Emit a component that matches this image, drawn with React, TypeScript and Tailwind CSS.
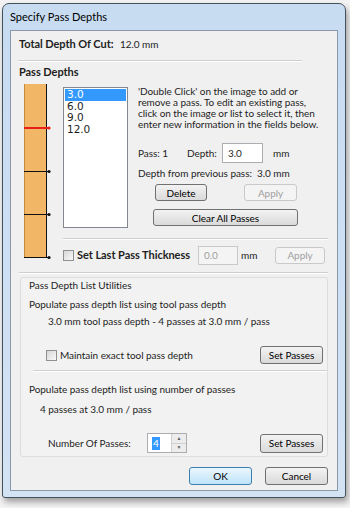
import React from 'react'

const font = "font-['Lato','Liberation_Sans',sans-serif]"

function Btn({ label, w, h = 'h-[18px]', disabled, blue }: { label: string; w: string; h?: string; disabled?: boolean; blue?: boolean }) {
    return (
        <button
            className={`${w} ${h} rounded-[3px] border text-[10px] leading-none flex items-center justify-center whitespace-nowrap ${
                disabled
                    ? 'border-[#c9c9c9] bg-[#f4f4f4] text-[#a0a0a0]'
                    : blue
                    ? 'border-[#3c7fb1] bg-gradient-to-b from-[#eaf6fd] to-[#bfe4f9] text-black'
                    : 'border-[#707070] bg-gradient-to-b from-[#f3f3f3] to-[#dadada] text-black'
            }`}
        >
            {label}
        </button>
    )
}

function Check() {
    return <span className="w-[11px] h-[11px] border border-[#8e8f8f] bg-gradient-to-br from-[#d8d8d8] to-[#f8f8f8] inline-block shrink-0" />
}

function Sep({ cls }: { cls: string }) {
    return <div className={`${cls} h-[2px] border-t border-[#cfcfcf] border-b border-b-white`} />
}

function Ruler() {
    return (
        <svg width="44" height="176" viewBox="0 0 44 176">
            <rect x="1" y="0" width="22" height="174" fill="#f2b766" />
            <line x1="1.5" y1="0" x2="1.5" y2="174" stroke="#c98a3a" />
            <line x1="23.5" y1="0" x2="23.5" y2="174" stroke="#111" />
            <line x1="1" y1="44" x2="25" y2="44" stroke="#e8201c" strokeWidth="2" />
            <circle cx="26" cy="44" r="1.6" fill="#e8201c" />
            <line x1="1" y1="87.5" x2="25" y2="87.5" stroke="#111" />
            <circle cx="26" cy="87.5" r="1.6" fill="#111" />
            <line x1="1" y1="130.5" x2="25" y2="130.5" stroke="#111" />
            <circle cx="26" cy="130.5" r="1.6" fill="#111" />
            <line x1="1" y1="173.5" x2="25" y2="173.5" stroke="#111" />
            <circle cx="26" cy="173.5" r="1.6" fill="#111" />
        </svg>
    )
}

export default function App() {
    return (
        <div className={`w-[350px] h-[508px] bg-[#f3f3f3] pl-[2px] pt-[3px] ${font} text-[10px] tracking-[-0.05px] text-[#1e1e1e] whitespace-nowrap`}>
            <div className="w-[344px] h-[495px] rounded-t-[7px] rounded-b-[3px] border border-[#44515e] bg-gradient-to-b from-[#c7dbf1] to-[#d3e3f4] shadow-[2px_4px_6px_rgba(0,0,0,0.35)] flex flex-col">
                <div className="h-[26px] pl-[7px] flex items-center text-[11px] tracking-normal text-black">Specify Pass Depths</div>
                <div className="mx-[7px] h-[461px] border border-[#8999a9] bg-[#f0f0f0] flex flex-col">
                    <div className="pl-[8px] mt-[6px] flex items-center h-[14px]">
                        <span className="font-bold text-[11px] w-[101px]">Total Depth Of Cut:</span>
                        <span>12.0 mm</span>
                    </div>
                    <Sep cls="ml-[7px] mt-[9px] w-[284px]" />
                    <div className="pl-[8px] mt-[3px] h-[14px] leading-[14px] text-[11px] font-bold">Pass Depths</div>
                    <div className="flex mt-[5px]">
                        <div className="pl-[12px] w-[52px]">
                            <Ruler />
                        </div>
                        <div className="flex-1 flex flex-col pr-[9px]">
                            <div className="flex">
                                <div className="w-[65px] h-[141px] mt-[3px] border border-[#828790] bg-white text-[10.5px] leading-[11.5px] pt-[1px] pl-[1px] font-['DejaVu_Sans',sans-serif]">
                                    <div className="bg-[#3399ff] text-white pl-[2px] w-[61px]">3.0</div>
                                    <div className="pl-[2px]">6.0</div>
                                    <div className="pl-[2px]">9.0</div>
                                    <div className="pl-[2px]">12.0</div>
                                </div>
                                <div className="ml-[10px] flex flex-col">
                                    <div className="leading-[11px] mt-[2px]">
                                        'Double Click' on the image to add or
                                        <br />
                                        remove a pass. To edit an existing pass,
                                        <br />
                                        click on the image or list to select it, then
                                        <br />
                                        enter new information in the fields below.
                                    </div>
                                    <div className="flex items-center mt-[13px] h-[20px]">
                                        <span className="w-[49px]">Pass: 1</span>
                                        <span className="w-[35px]">Depth:</span>
                                        <span className="w-[41px] h-[20px] border border-[#abadb3] bg-white pl-[5px] flex items-center">3.0</span>
                                        <span className="ml-[10px]">mm</span>
                                    </div>
                                    <div className="mt-[3px] h-[14px] leading-[14px]">Depth from previous pass:&nbsp;&nbsp;3.0 mm</div>
                                    <div className="flex mt-[4px] ml-[17px]">
                                        <Btn label="Delete" w="w-[52px]" h="h-[17px]" />
                                        <div className="ml-[37px]">
                                            <Btn label="Apply" w="w-[53px]" h="h-[17px]" disabled />
                                        </div>
                                    </div>
                                    <div className="mt-[8px] ml-[15px]">
                                        <Btn label="Clear All Passes" w="w-[145px]" h="h-[17px]" />
                                    </div>
                                </div>
                            </div>
                            <Sep cls="mt-[10px]" />
                            <div className="flex items-center mt-[5px] h-[20px]">
                                <Check />
                                <span className="font-bold text-[11px] ml-[3px] w-[121px]">Set Last Pass Thickness</span>
                                <span className="w-[40px] h-[19px] border border-[#c9c9c9] bg-[#f4f4f4] text-[#a0a0a0] pl-[5px] flex items-center">0.0</span>
                                <span className="ml-[3px] w-[34px]">mm</span>
                                <Btn label="Apply" w="w-[50px]" h="h-[17px]" disabled />
                            </div>
                        </div>
                    </div>
                    <Sep cls="ml-[8px] mr-[9px] mt-[7px]" />
                    <div className="mx-[9px] mt-[3px] border border-[#dddddd] rounded-[3px] bg-[#f2f2f2] flex flex-col pb-[3px]">
                        <div className="pl-[8px] h-[14px] leading-[14px]">Pass Depth List Utilities</div>
                        <div className="pl-[8px] mt-[5px] h-[14px] leading-[14px]">Populate pass depth list using tool pass depth</div>
                        <div className="pl-[27px] mt-[3px] h-[14px] leading-[14px]">3.0 mm tool pass depth - 4 passes at 3.0 mm / pass</div>
                        <div className="flex items-center mt-[18px] pl-[25px] pr-[4px] h-[18px]">
                            <Check />
                            <span className="ml-[3px]">Maintain exact tool pass depth</span>
                            <div className="ml-auto">
                                <Btn label="Set Passes" w="w-[63px]" />
                            </div>
                        </div>
                        <Sep cls="ml-[12px] mt-[6px]" />
                        <div className="pl-[8px] mt-[10px] h-[14px] leading-[14px]">Populate pass depth list using number of passes</div>
                        <div className="pl-[19px] mt-[6px] h-[14px] leading-[14px]">4 passes at 3.0 mm / pass</div>
                        <div className="flex items-center mt-[17px] pl-[27px] pr-[4px] h-[20px]">
                            <span className="w-[99px]">Number Of Passes:</span>
                            <div className="flex w-[40px] h-[20px] border border-[#abadb3] bg-white">
                                <div className="flex-1 pl-[4px] flex items-center">
                                    <span className="bg-[#3399ff] text-white leading-[13px] px-[1px]">4</span>
                                </div>
                                <div className="w-[15px] flex flex-col bg-[#ececec] border-l border-[#d0d0d0]">
                                    <span className="flex-1 flex items-center justify-center text-[5px] text-[#606060] border-b border-[#d0d0d0]">▲</span>
                                    <span className="flex-1 flex items-center justify-center text-[5px] text-[#606060]">▼</span>
                                </div>
                            </div>
                            <div className="ml-auto">
                                <Btn label="Set Passes" w="w-[63px]" h="h-[19px]" />
                            </div>
                        </div>
                    </div>
                    <div className="flex justify-end gap-[13px] mt-[10px] pr-[9px]">
                        <Btn label="OK" w="w-[63px]" blue />
                        <Btn label="Cancel" w="w-[63px]" />
                    </div>
                </div>
            </div>
        </div>
    )
}
